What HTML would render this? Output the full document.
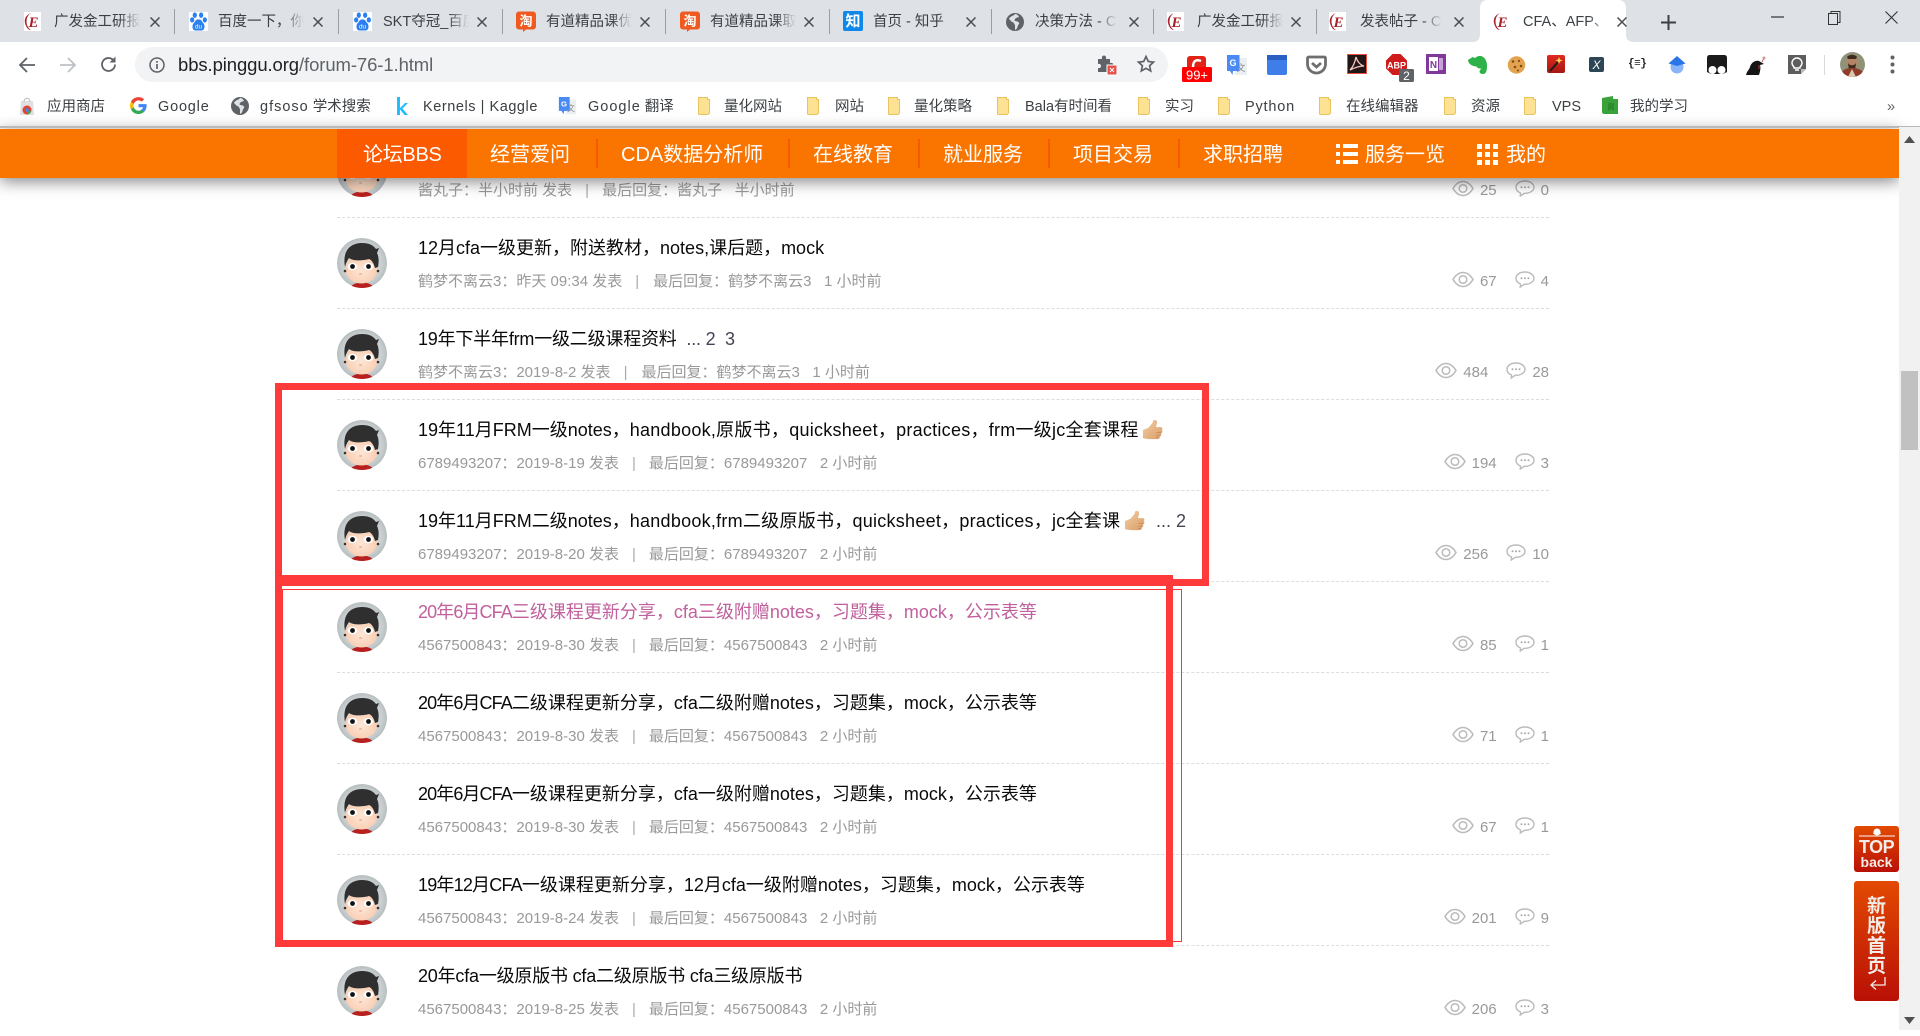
<!DOCTYPE html>
<html lang="zh-CN"><head><meta charset="utf-8"><title>CFA、AFP、FRM</title>
<style>
*{box-sizing:border-box}
html,body{margin:0;padding:0;width:1920px;height:1030px;overflow:hidden;background:#fff;font-family:"Liberation Sans","Noto Sans CJK SC",sans-serif}
.a,.a>*{position:absolute}
svg{position:absolute;overflow:visible}
#tabs{left:0;top:0;width:1920px;height:42px;background:#dee1e6}
.tt{top:13px;height:18px;line-height:18px;font-size:14.5px;color:#3c4043;white-space:nowrap;overflow:hidden;width:86px;-webkit-mask-image:linear-gradient(90deg,#000 76%,transparent);mask-image:linear-gradient(90deg,#000 76%,transparent)}
.sp{top:9px;width:1px;height:25px;background:#9a9ea3}
#bar{left:0;top:42px;width:1920px;height:84px;background:#fff}
#url{left:135px;top:47px;width:1033px;height:35px;border-radius:18px;background:#f1f3f4}
.bm{top:97px;height:20px;line-height:20px;font-size:14.5px;color:#3c4043;white-space:nowrap}
.bm u{text-decoration:none;letter-spacing:.8px}
#nav{left:0;top:129px;width:1899px;height:49px;background:#f97500;box-shadow:0 3px 16px rgba(0,0,0,.5);z-index:5}
#nav div{top:0;line-height:52px;height:49px;font-size:20px;color:#fff;white-space:nowrap}
#nav i{position:absolute;top:10px;width:2px;height:29px;background:#f55a00}
.r{position:absolute;left:0;width:1899px;height:91px;z-index:1}
.r>*{position:absolute}
.r .l{left:337px;top:91px;width:1212px;height:0;border-top:1px dashed #ddd}
.r .t{left:418px;top:18px;line-height:26px;font-size:18px;color:#0a0a0a;white-space:nowrap}
.r .t.v{color:#c0609c}
.r .t u{text-decoration:none}
.r .m{left:418px;top:54px;line-height:22px;font-size:15px;color:#999;white-space:pre}
.r .m b{font-weight:400;color:#aaa;margin:0 13px}
.r .s{right:350px;top:54px;height:22px;line-height:22px;font-size:15px;color:#999;display:flex;align-items:center;white-space:nowrap}
.s svg{position:static;display:block;margin-top:-5px}
.s span{margin:0 0 0 6px}
.s span+svg{margin-left:18px}
.red{background:#ff3a3a;z-index:3}
#sb{left:1899px;top:127px;width:21px;height:903px;background:#f1f1f1;z-index:6}
.go{z-index:7;left:1854px;width:45px;border-radius:3px;background:linear-gradient(#e24a02,#b91006);color:#f3ece8;text-align:center}
</style></head><body>

<svg width="0" height="0" style="position:absolute">
<defs>
<symbol id="av" viewBox="0 0 50 50">
<defs><clipPath id="c"><circle cx="25" cy="25" r="25"/></clipPath><radialGradient id="bgv" cx=".5" cy=".5" r=".6"><stop offset="0" stop-color="#eef0f0"/><stop offset=".7" stop-color="#c6cccd"/><stop offset="1" stop-color="#a2abad"/></radialGradient><radialGradient id="fc" cx=".5" cy=".55" r=".6"><stop offset="0" stop-color="#fde6d6"/><stop offset="1" stop-color="#f8c9ac"/></radialGradient></defs>
<g clip-path="url(#c)"><circle cx="25" cy="25" r="25" fill="url(#bgv)"/>
<ellipse cx="25" cy="49.500" rx="11" ry="5" fill="#b8201f"/>
<ellipse cx="24.500" cy="31" rx="16" ry="14.500" fill="url(#fc)"/>
<path d="M8 29C5 12 14 5 25 5c7 0 11 2 14 6l3-1-2 5c2 4 2 9 1 14l-3 1c-1-4-3-8-6-9-7 2-16 2-20-1-2 3-3 5-4 9z" fill="#2f2f30"/>
<ellipse cx="15.500" cy="28.500" rx="4.800" ry="3.800" fill="#fff"/><ellipse cx="31.500" cy="28.500" rx="4.800" ry="3.800" fill="#fff"/>
<circle cx="15.500" cy="28.500" r="2.400" fill="#111"/><circle cx="31.500" cy="28.500" r="2.400" fill="#111"/>
<circle cx="8" cy="33" r="1.300" fill="#333"/><circle cx="41" cy="33" r="1.300" fill="#333"/>
<ellipse cx="23.500" cy="36" rx="1.500" ry="1" fill="#f2b79a"/></g>
</symbol>
<symbol id="eye" viewBox="0 0 22 17"><path d="M1 8.500C4 3.500 7 1.500 11 1.500s7 2 10 7c-3 5-6 7-10 7s-7-2-10-7z" fill="none" stroke="#bbb" stroke-width="1.500"/><circle cx="11" cy="8.500" r="3.800" fill="none" stroke="#bbb" stroke-width="1.500"/></symbol>
<symbol id="cm" viewBox="0 0 20 17"><path d="M10 1C5 1 1 3.600 1 7.300c0 2.500 1.800 4.600 4.500 5.700L5.300 16l4-2.700h.7c5 0 9-2.600 9-6S15 1 10 1z" fill="none" stroke="#bbb" stroke-width="1.400"/><circle cx="6.500" cy="7.300" r="1" fill="#aaa"/><circle cx="10" cy="7.300" r="1" fill="#aaa"/><circle cx="13.500" cy="7.300" r="1" fill="#aaa"/></symbol>
<symbol id="th" viewBox="0 0 22 22"><defs><linearGradient id="tg" x1="0" y1="0" x2="1" y2="1"><stop offset="0" stop-color="#f3cfa3"/><stop offset="1" stop-color="#d99c68"/></linearGradient></defs><path d="M1 10.500l6-2.500 4-5 1-3c3-.5 4.500 1 3.500 4l-1 3.500h5c2 0 2.500 2 1 3 1.500 1 1 3-.500 3.500.5 1.500 0 3-1.500 3.500.3 1.500-.5 2.500-2.500 2.500H8c-2.500 0-3-.5-5-.5L1 19z" fill="url(#tg)"/><path d="M15 13h5M15 16h4.500M14.500 18.500h3.500" stroke="#c48a58" stroke-width=".8"/></symbol>
<symbol id="x" viewBox="0 0 10 10"><path d="M.5.5l9 9M9.500.5l-9 9" stroke="#4a4d50" stroke-width="1.500" fill="none"/></symbol>
<symbol id="fE" viewBox="0 0 17 19"><rect width="17" height="19" fill="#fff"/><path d="M7 1C2 3 0 7 1 11s3 7 6 7C4 16 2.500 13 2.500 9.500S4 3 7 1z" fill="#a8222a"/><text x="4.500" y="15" font-family="Liberation Serif" font-style="italic" font-weight="700" font-size="15" fill="#a8222a">E</text></symbol>
<symbol id="fB" viewBox="0 0 18 18"><rect width="18" height="18" fill="#fff"/><g fill="#2b7ff0"><ellipse cx="5.500" cy="3" rx="2" ry="2.600"/><ellipse cx="11.500" cy="3" rx="2" ry="2.600"/><ellipse cx="3" cy="7.500" rx="2" ry="2.500"/><ellipse cx="15" cy="7.500" rx="2" ry="2.500"/><path d="M9 7c3 0 3 2 4.500 3.500 2 2 1.500 7-1.500 7H6c-3 0-3.500-5-1.500-7C6 9 6 7 9 7z"/></g><text x="9" y="15.500" text-anchor="middle" font-family="Liberation Sans" font-size="6" fill="#fff">du</text></symbol>
<symbol id="fT" viewBox="0 0 20 20"><rect width="20" height="18" rx="3" fill="#ef5a21"/><path d="M7 18v2.500l3-2.500z" fill="#ef5a21"/><text x="10" y="14" text-anchor="middle" font-family="Noto Sans CJK SC" font-size="13" font-weight="700" fill="#fff">淘</text></symbol>
<symbol id="fZ" viewBox="0 0 20 20"><rect width="20" height="20" rx="2" fill="#0f88eb"/><text x="10" y="15" text-anchor="middle" font-family="Noto Sans CJK SC" font-size="15" font-weight="700" fill="#fff">知</text></symbol>
<symbol id="fG" viewBox="0 0 18 18"><circle cx="9" cy="9" r="9" fill="#5f6368"/><path d="M9 1c-1 2-5 2-6 5l3 3c2 0 2 2 3 3v5c3-1 2-4 4-6 1-2-2-3-4-3-1-1 0-2 1-3l3-1C12 2 11 1 9 1z" fill="#dee1e6"/></symbol>
<symbol id="fo" viewBox="0 0 16 20"><path d="M1.500 1.500h9l0 2 2 0v13c0 1-1 2-2 2h-8c-.6 0-1-.4-1-1z" fill="#fde293" stroke="#e9c35f"/></symbol>
<symbol id="fT2" viewBox="0 0 22 24"><rect x="9" y="4" width="12" height="17" fill="#eceff1"/><text x="15" y="17" text-anchor="middle" font-family="Noto Sans CJK SC" font-size="9" fill="#888">文</text><path d="M1 1h12.500v16H7l-.500 4-2.500-4H1z" fill="#4a8af4"/><text x="7" y="12" text-anchor="middle" font-family="Liberation Sans" font-weight="700" font-size="9" fill="#fff">G</text></symbol>
</defs></svg>

<div class="a" id="tabs" style="left:0;top:0">
<svg style="left:1472px;top:0" width="178" height="42"><path d="M0 42c6 0 8-3 8-8V8c0-5 3-8 8-8h130c5 0 8 3 8 8v26c0 5 2 8 8 8z" fill="#fff"/></svg>
<svg style="left:24px;top:12px" width="17" height="19"><use href="#fE"/></svg><div class="tt" style="left:54px">广发金工研报告</div><svg style="left:150px;top:17px" width="10" height="10"><use href="#x"/></svg><i class="sp" style="left:174px"></i>
<svg style="left:189px;top:12px" width="19" height="19"><use href="#fB"/></svg><div class="tt" style="left:218px">百度一下，你就知道</div><svg style="left:313px;top:17px" width="10" height="10"><use href="#x"/></svg><i class="sp" style="left:338px"></i>
<svg style="left:353px;top:12px" width="19" height="19"><use href="#fB"/></svg><div class="tt" style="left:383px">SKT夺冠_百度</div><svg style="left:477px;top:17px" width="10" height="10"><use href="#x"/></svg><i class="sp" style="left:502px"></i>
<svg style="left:516px;top:11px" width="20" height="21"><use href="#fT"/></svg><div class="tt" style="left:546px">有道精品课优选</div><svg style="left:640px;top:17px" width="10" height="10"><use href="#x"/></svg><i class="sp" style="left:665px"></i>
<svg style="left:680px;top:11px" width="20" height="21"><use href="#fT"/></svg><div class="tt" style="left:710px">有道精品课取</div><svg style="left:804px;top:17px" width="10" height="10"><use href="#x"/></svg><i class="sp" style="left:829px"></i>
<svg style="left:843px;top:11px" width="20" height="20"><use href="#fZ"/></svg><div class="tt" style="left:873px">首页 - 知乎</div><svg style="left:966px;top:17px" width="10" height="10"><use href="#x"/></svg><i class="sp" style="left:991px"></i>
<svg style="left:1006px;top:13px" width="18" height="18"><use href="#fG"/></svg><div class="tt" style="left:1035px;width:82px">决策方法 - CDA</div><svg style="left:1129px;top:17px" width="10" height="10"><use href="#x"/></svg><i class="sp" style="left:1153px"></i>
<svg style="left:1167px;top:12px" width="17" height="19"><use href="#fE"/></svg><div class="tt" style="left:1197px">广发金工研报告</div><svg style="left:1291px;top:17px" width="10" height="10"><use href="#x"/></svg><i class="sp" style="left:1316px"></i>
<svg style="left:1329px;top:12px" width="17" height="19"><use href="#fE"/></svg><div class="tt" style="left:1360px;width:82px">发表帖子 - CDA</div><svg style="left:1454px;top:17px" width="10" height="10"><use href="#x"/></svg>
<svg style="left:1493px;top:12px" width="17" height="19"><use href="#fE"/></svg><div class="tt" style="left:1523px">CFA、AFP、FRM</div><svg style="left:1617px;top:17px" width="10" height="10"><use href="#x"/></svg>
<svg style="left:1661px;top:15px" width="15" height="15"><path d="M7.500 0v15M0 7.500h15" stroke="#3c4043" stroke-width="2"/></svg>
<svg style="left:1771px;top:16px" width="13" height="2"><path d="M0 1h13" stroke="#333" stroke-width="1.200"/></svg>
<svg style="left:1828px;top:11px" width="13" height="14"><rect x=".5" y="2.500" width="9" height="11" fill="none" stroke="#333"/><path d="M3 2.500V.5h9v11h-2.500" fill="none" stroke="#333"/></svg>
<svg style="left:1885px;top:11px" width="13" height="13"><path d="M.5.5l12 12M12.500.5l-12 12" stroke="#333" stroke-width="1.100"/></svg>
</div>

<div class="a" id="bar" style="left:0;top:42px"></div>
<div class="a" style="left:0;top:0;width:1920px;height:130px;z-index:2;pointer-events:none">
<div id="url"></div>
<svg style="left:18px;top:56px" width="18" height="18"><path d="M17 9H2M9 2 2 9l7 7" fill="none" stroke="#5f6368" stroke-width="1.800"/></svg>
<svg style="left:59px;top:56px" width="18" height="18"><path d="M1 9h15M9 2l7 7-7 7" fill="none" stroke="#bdc1c6" stroke-width="1.800"/></svg>
<svg style="left:99px;top:55px" width="19" height="19"><path d="M16 9.500a6.500 6.500 0 1 1-2-4.700L16 7" fill="none" stroke="#5f6368" stroke-width="1.800"/><path d="M16.500 1.500v6h-6z" fill="#5f6368"/></svg>
<svg style="left:149px;top:57px" width="16" height="16"><circle cx="8" cy="8" r="7" fill="none" stroke="#5f6368" stroke-width="1.500"/><path d="M8 7v5M8 4v1.800" stroke="#5f6368" stroke-width="1.700"/></svg>
<div style="left:178px;top:53px;line-height:24px;font-size:18.500px;letter-spacing:-.1px;color:#202124;white-space:nowrap">bbs.pinggu.org<span style="color:#5f6368">/forum-76-1.html</span></div>

<svg style="left:1097px;top:55px" width="20" height="20"><path d="M1 4h4c-.5-2 .5-3.500 2-3.500S9.500 2 9 4h4v4c2-.5 3.500.5 3.500 2S15 12.500 13 12v5H1v-4c2 .5 3-.5 3-2S3 8.500 1 9z" fill="#5f6368"/><rect x="10" y="10" width="10" height="10" fill="#e5534b" stroke="#fff"/><path d="M13 13l4 4M17 13l-4 4" stroke="#fff"/></svg>
<svg style="left:1137px;top:55px" width="18" height="18"><path d="M9 1.500l2.300 5 5.200.6-3.900 3.600 1.100 5.300L9 13.300 4.300 16l1.100-5.300L1.500 7.100l5.200-.6z" fill="none" stroke="#5f6368" stroke-width="1.700"/></svg>

<svg style="left:1181px;top:54px" width="32" height="29"><rect x="6" y="2" width="19" height="18" rx="3" fill="#e02517"/><path d="M20 7c-5-2-8 0-8 6v5" fill="none" stroke="#fff" stroke-width="2.500"/><rect x="1" y="13" width="30" height="15" rx="1.500" fill="#f00"/><text x="16" y="25.500" text-anchor="middle" font-family="Liberation Sans" font-size="13" fill="#fff">99+</text></svg>
<svg style="left:1226px;top:54px" width="22" height="24"><use href="#fT2"/></svg>
<svg style="left:1267px;top:55px" width="20" height="20"><rect width="20" height="20" rx="2" fill="#3f7ee8"/><rect width="20" height="5" fill="#2a5fc4"/></svg>
<svg style="left:1306px;top:55px" width="21" height="20"><path d="M3 2h15c1 0 1.500.5 1.500 1.500V9c0 5-4 9-9 9s-9-4-9-9V3.500C1.500 2.500 2 2 3 2z" fill="none" stroke="#6e6e6e" stroke-width="2.800"/><path d="M6 8l4.500 4L15 8" fill="none" stroke="#6e6e6e" stroke-width="2.800"/></svg>
<svg style="left:1347px;top:54px" width="20" height="20"><rect x=".5" y=".5" width="19" height="19" fill="#221617" stroke="#e94e3d"/><path d="M9 3c-1 5-3 10-6 13 4-2 9-4 14-4-4-1-7-5-8-9z" fill="none" stroke="#f7c7c3" stroke-width="1.300"/></svg>
<svg style="left:1386px;top:54px" width="29" height="29"><path d="M6.500 0h8L21 6.500v8L14.500 21h-8L0 14.500v-8z" fill="#cf1b1b"/><text x="10.500" y="14.500" text-anchor="middle" font-family="Liberation Sans" font-weight="700" font-size="9" fill="#fff">ABP</text><rect x="13" y="15" width="15" height="13" rx="1.500" fill="#5f6368"/><text x="20.500" y="26" text-anchor="middle" font-family="Liberation Sans" font-size="12" fill="#fff">2</text></svg>
<svg style="left:1426px;top:54px" width="20" height="20"><rect width="20" height="20" fill="#80399a"/><rect x="3" y="3" width="9" height="14" fill="#fff"/><text x="7.500" y="14" text-anchor="middle" font-family="Liberation Sans" font-weight="700" font-size="10" fill="#80399a">N</text><rect x="13" y="4" width="4" height="12" fill="#c9a4d6"/></svg>
<svg style="left:1467px;top:55px" width="21" height="20"><path d="M1 5l4.500-3L8 3c2-2 6-3 8-1 2 1 4 4 4 9 0 5-1 8-4 8-2 0-3.500-1-3.500-2.500S14 14 15 14l-2-.5c-2 0-3-1-3.500-2-3 0-6-1.500-7.500-3.500C1.500 7 1 6 1 5z" fill="#2db24a"/></svg>
<svg style="left:1507px;top:56px" width="19" height="18"><circle cx="9.500" cy="9" r="8.700" fill="#e3a24d"/><circle cx="6" cy="5.500" r="1.300" fill="#7c4e1a"/><circle cx="12" cy="5" r="1.100" fill="#7c4e1a"/><circle cx="14" cy="10" r="1.300" fill="#7c4e1a"/><circle cx="8" cy="11" r="1.300" fill="#7c4e1a"/><circle cx="11" cy="14.500" r="1" fill="#7c4e1a"/></svg>
<svg style="left:1547px;top:55px" width="19" height="19"><defs><linearGradient id="w" x1="0" y1="0" x2="0" y2="1"><stop offset="0" stop-color="#e02a1f"/><stop offset="1" stop-color="#a51713"/></linearGradient></defs><rect width="18" height="18" rx="2" fill="url(#w)"/><path d="M3 16 11 7" stroke="#1c1c1c" stroke-width="2"/><path d="M12 2l1 2.500L15.500 5.500 13 6.500 12 9l-1-2.500L8.500 5.500 11 4.500z" fill="#fbd35a"/></svg>
<svg style="left:1589px;top:57px" width="15" height="15"><rect width="15" height="15" rx="2" fill="#2c4656"/><text x="7.500" y="12" text-anchor="middle" font-family="Liberation Sans" font-style="italic" font-size="12" fill="#fff">X</text></svg>
<div style="left:1628px;top:55px;font-family:'Liberation Mono';font-size:11px;font-weight:700;line-height:18px;color:#222;white-space:nowrap;letter-spacing:-.5px">{≡}</div>
<svg style="left:1668px;top:55px" width="18" height="19"><circle cx="9" cy="12" r="6.500" fill="#8ab4f8"/><path d="M9 1l8.500 7.500L9 11 .5 8.500z" fill="#2a76e8"/></svg>
<svg style="left:1707px;top:55px" width="20" height="20"><path d="M3 0h14c2 0 3 1 3 3v14l-4 2H4l-4-2V3c0-2 1-3 3-3z" fill="#1b1b1b"/><circle cx="5.500" cy="15" r="4" fill="#fff"/><circle cx="14.500" cy="15" r="4" fill="#fff"/></svg>
<svg style="left:1746px;top:56px" width="21" height="19"><path d="M0 19c1-4 3-5 4-8 1-4 5-7 9-6l5 3-4 1c1 3 0 7-1 10z" fill="#151515"/><path d="M16 6l2-4" stroke="#c56" stroke-width="1"/><circle cx="18" cy="2" r="1.500" fill="#c98"/><path d="M13 9v4" stroke="#c33"/></svg>
<svg style="left:1787px;top:55px" width="20" height="20"><path d="M1 0h18v14l-5 5H1z" fill="#5d5d5d"/><path d="M14 19v-5h5z" fill="#bbb"/><path d="M7 12c-1-1-2-2-2-4a5 5 0 0 1 10 0c0 2-1 3-2 4v1H7zM8 15h4" fill="none" stroke="#fff" stroke-width="1.400"/></svg>
<i style="left:1824px;top:55px;width:1px;height:20px;background:#d7d9db"></i>
<svg style="left:1840px;top:52px" width="25" height="25"><defs><clipPath id="p"><circle cx="12.500" cy="12.500" r="12.500"/></clipPath></defs><g clip-path="url(#p)"><rect width="25" height="25" fill="#8f9479"/><ellipse cx="12" cy="10" rx="5.500" ry="7" fill="#b58365"/><path d="M7 5c2-3 8-3 10 0l-1 2H8zM8 11c2 3 6 3 8 0l-1 8H9z" fill="#3e2c1e"/><path d="M0 25c1-7 6-9 12-9s12 2 13 9z" fill="#8e3b2a"/><path d="M8 25l4-8 4 8z" fill="#d8c8b0"/></g></svg>
<svg style="left:1890px;top:55px" width="5" height="19"><circle cx="2.500" cy="2.500" r="2" fill="#5f6368"/><circle cx="2.500" cy="9.500" r="2" fill="#5f6368"/><circle cx="2.500" cy="16.500" r="2" fill="#5f6368"/></svg>

<svg style="left:19px;top:97px" width="16" height="19"><path d="M2 4h12l1 14H1z" fill="#e0e0e0"/><path d="M5 5c0-5 6-5 6 0" fill="none" stroke="#bbb"/><circle cx="8" cy="13" r="4.500" fill="#e0452f"/><path d="M8 13v4.500a4.500 4.500 0 0 0 4-3z" fill="#34a853"/><circle cx="8" cy="13" r="1.800" fill="#4285f4"/></svg>
<div class="bm" style="left:47px">应用商店</div>
<svg style="left:130px;top:97px" width="17" height="17" viewBox="0 0 18 18"><path d="M17.600 9.200c0-.6 0-1.200-.1-1.700H9v3.300h4.800a4 4 0 0 1-1.800 2.700v2.200h2.900c1.700-1.600 2.700-3.900 2.700-6.500z" fill="#4285f4"/><path d="M9 18c2.400 0 4.500-.8 5.900-2.200L12 13.600c-.8.500-1.800.9-3 .9-2.300 0-4.300-1.600-5-3.700H1v2.300A9 9 0 0 0 9 18z" fill="#34a853"/><path d="M4 10.800a5.400 5.400 0 0 1 0-3.500V5H1a9 9 0 0 0 0 8.100z" fill="#fbbc05"/><path d="M9 3.600c1.300 0 2.500.5 3.400 1.300L15 2.400A9 9 0 0 0 1 5l3 2.300c.7-2.100 2.700-3.700 5-3.700z" fill="#ea4335"/></svg>
<div class="bm" style="left:158px"><u>Google</u></div>
<svg style="left:231px;top:97px" width="18" height="18"><use href="#fG"/></svg>
<div class="bm" style="left:260px"><u style="letter-spacing:1px">gfsoso</u> 学术搜索</div>
<svg style="left:396px;top:96px" width="12" height="20"><path d="M1 1h3v11l5-5h3l-5.500 5.500L12 19H8.500L4 13.500V19H1z" fill="#20beff"/></svg>
<div class="bm" style="left:423px"><u style="letter-spacing:.55px">Kernels | Kaggle</u></div>
<svg style="left:558px;top:96px" width="19" height="21"><use href="#fT2"/></svg>
<div class="bm" style="left:588px"><u style="letter-spacing:1px">Google</u> 翻译</div>
<svg style="left:697px;top:96px" width="16" height="20"><use href="#fo"/></svg><div class="bm" style="left:724px">量化网站</div>
<svg style="left:806px;top:96px" width="16" height="20"><use href="#fo"/></svg><div class="bm" style="left:835px">网站</div>
<svg style="left:887px;top:96px" width="16" height="20"><use href="#fo"/></svg><div class="bm" style="left:914px">量化策略</div>
<svg style="left:996px;top:96px" width="16" height="20"><use href="#fo"/></svg><div class="bm" style="left:1025px">Bala有时间看</div>
<svg style="left:1137px;top:96px" width="16" height="20"><use href="#fo"/></svg><div class="bm" style="left:1165px">实习</div>
<svg style="left:1217px;top:96px" width="16" height="20"><use href="#fo"/></svg><div class="bm" style="left:1245px"><u>Python</u></div>
<svg style="left:1318px;top:96px" width="16" height="20"><use href="#fo"/></svg><div class="bm" style="left:1346px">在线编辑器</div>
<svg style="left:1443px;top:96px" width="16" height="20"><use href="#fo"/></svg><div class="bm" style="left:1471px">资源</div>
<svg style="left:1523px;top:96px" width="16" height="20"><use href="#fo"/></svg><div class="bm" style="left:1552px">VPS</div>
<svg style="left:1601px;top:95px" width="18" height="20"><path d="M1 3l11-2v3h5v15H3c-1 0-2-1-2-2z" fill="#3aa23a"/><path d="M7 8h6v8l-3-2-3 2z" fill="#2e8b2e"/></svg>
<div class="bm" style="left:1630px">我的学习</div>
<div class="bm" style="left:1887px;color:#5f6368">»</div>
</div>

<div style="position:absolute;left:0;top:126px;width:1920px;height:2px;background:#b9b9b9;z-index:6"></div>

<div class="a" id="nav">
<div style="left:337px;width:130px;background:#fb5a00"></div>
<div style="left:363px;letter-spacing:-.3px">论坛BBS</div>
<div style="left:490px">经营爱问</div><i style="left:596px"></i>
<div style="left:621px">CDA数据分析师</div><i style="left:788px"></i>
<div style="left:813px">在线教育</div><i style="left:918px"></i>
<div style="left:943px">就业服务</div><i style="left:1048px"></i>
<div style="left:1073px">项目交易</div><i style="left:1178px"></i>
<div style="left:1203px">求职招聘</div>
<svg style="left:1336px;top:15px" width="22" height="21"><path d="M0 0h4v4H0zM7 0h15v4H7zM0 8h4v4H0zM7 8h15v4H7zM0 16h4v4H0zM7 16h15v4H7z" fill="#fff"/></svg>
<div style="left:1365px">服务一览</div>
<svg style="left:1477px;top:15px" width="22" height="21"><path d="M0 0h5v5H0zM8 0h5v5H8zM16 0h5v5h-5zM0 8h5v5H0zM8 8h5v5H8zM16 8h5v5h-5zM0 16h5v5H0zM8 16h5v5H8zM16 16h5v5h-5z" fill="#fff"/></svg>
<div style="left:1506px">我的</div>
</div>

<div class="r" style="top:126px"><svg style="left:337px;top:21px" width="50" height="50"><use href="#av"/></svg><div class="t">酱丸子的帖子</div><div class="m">酱丸子：半小时前 发表<b>|</b>最后回复：酱丸子   半小时前</div><div class="s"><svg width="22" height="17"><use href="#eye"/></svg><span>25</span><svg width="20" height="17"><use href="#cm"/></svg><span>0</span></div><div class="l"></div></div>

<div class="r" style="top:217px"><svg style="left:337px;top:21px" width="50" height="50"><use href="#av"/></svg><div class="t">12月cfa一级更新，附送教材，notes,课后题，mock</div><div class="m">鹤梦不离云3：昨天 09:34 发表<b style="margin-right:14px">|</b>最后回复：鹤梦不离云3   1 小时前</div><div class="s"><svg width="22" height="17"><use href="#eye"/></svg><span>67</span><svg width="20" height="17"><use href="#cm"/></svg><span>4</span></div><div class="l"></div></div>

<div class="r" style="top:308px"><svg style="left:337px;top:21px" width="50" height="50"><use href="#av"/></svg><div class="t" style="letter-spacing:-.2px">19年下半年frm一级二级课程资料 <span style="color:#445;margin-left:5px">... 2&nbsp; 3</span></div><div class="m">鹤梦不离云3：2019-8-2 发表<b style="margin-right:14px">|</b>最后回复：鹤梦不离云3   1 小时前</div><div class="s"><svg width="22" height="17"><use href="#eye"/></svg><span>484</span><svg width="20" height="17"><use href="#cm"/></svg><span>28</span></div><div class="l"></div></div>

<div class="r" style="top:399px"><svg style="left:337px;top:21px" width="50" height="50"><use href="#av"/></svg><div class="t">19年11月FRM一级notes，<u style="letter-spacing:.26px">handbook,原版书，quicksheet，practices，frm一级jc全套课程</u></div><svg style="left:1142px;top:21px" width="21" height="21"><use href="#th"/></svg><div class="m">6789493207：2019-8-19 发表<b>|</b>最后回复：6789493207   2 小时前</div><div class="s"><svg width="22" height="17"><use href="#eye"/></svg><span>194</span><svg width="20" height="17"><use href="#cm"/></svg><span>3</span></div><div class="l"></div></div>

<div class="r" style="top:490px"><svg style="left:337px;top:21px" width="50" height="50"><use href="#av"/></svg><div class="t">19年11月FRM二级notes，<u style="letter-spacing:.26px">handbook,frm二级原版书，quicksheet，practices，jc全套课</u></div><svg style="left:1124px;top:21px" width="21" height="21"><use href="#th"/></svg><div class="t" style="left:1156px;color:#445">... 2</div><div class="m">6789493207：2019-8-20 发表<b>|</b>最后回复：6789493207   2 小时前</div><div class="s"><svg width="22" height="17"><use href="#eye"/></svg><span>256</span><svg width="20" height="17"><use href="#cm"/></svg><span>10</span></div><div class="l"></div></div>

<div class="r" style="top:581px"><svg style="left:337px;top:21px" width="50" height="50"><use href="#av"/></svg><div class="t v"><u style="letter-spacing:-.9px">20年6月CFA</u>三级课程更新分享，cfa三级附赠notes，习题集，mock，公示表等</div><div class="m">4567500843：2019-8-30 发表<b>|</b>最后回复：4567500843   2 小时前</div><div class="s"><svg width="22" height="17"><use href="#eye"/></svg><span>85</span><svg width="20" height="17"><use href="#cm"/></svg><span>1</span></div><div class="l"></div></div>

<div class="r" style="top:672px"><svg style="left:337px;top:21px" width="50" height="50"><use href="#av"/></svg><div class="t"><u style="letter-spacing:-.9px">20年6月CFA</u>二级课程更新分享，cfa二级附赠notes，习题集，mock，公示表等</div><div class="m">4567500843：2019-8-30 发表<b>|</b>最后回复：4567500843   2 小时前</div><div class="s"><svg width="22" height="17"><use href="#eye"/></svg><span>71</span><svg width="20" height="17"><use href="#cm"/></svg><span>1</span></div><div class="l"></div></div>

<div class="r" style="top:763px"><svg style="left:337px;top:21px" width="50" height="50"><use href="#av"/></svg><div class="t"><u style="letter-spacing:-.9px">20年6月CFA</u>一级课程更新分享，cfa一级附赠notes，习题集，mock，公示表等</div><div class="m">4567500843：2019-8-30 发表<b>|</b>最后回复：4567500843   2 小时前</div><div class="s"><svg width="22" height="17"><use href="#eye"/></svg><span>67</span><svg width="20" height="17"><use href="#cm"/></svg><span>1</span></div><div class="l"></div></div>

<div class="r" style="top:854px"><svg style="left:337px;top:21px" width="50" height="50"><use href="#av"/></svg><div class="t"><u style="letter-spacing:-.8px">19年12月CFA</u>一级课程更新分享，12月cfa一级附赠notes，习题集，mock，公示表等</div><div class="m">4567500843：2019-8-24 发表<b>|</b>最后回复：4567500843   2 小时前</div><div class="s"><svg width="22" height="17"><use href="#eye"/></svg><span>201</span><svg width="20" height="17"><use href="#cm"/></svg><span>9</span></div><div class="l"></div></div>

<div class="r" style="top:945px"><svg style="left:337px;top:21px" width="50" height="50"><use href="#av"/></svg><div class="t" style="letter-spacing:-.2px">20年cfa一级原版书 cfa二级原版书 cfa三级原版书</div><div class="m">4567500843：2019-8-25 发表<b>|</b>最后回复：4567500843   2 小时前</div><div class="s"><svg width="22" height="17"><use href="#eye"/></svg><span>206</span><svg width="20" height="17"><use href="#cm"/></svg><span>3</span></div></div>

<div style="position:absolute;left:282px;top:589px;width:900px;height:353px;border:1px solid #f33;z-index:2"></div>
<div class="red" style="position:absolute;left:275px;top:383px;width:934px;height:7px"></div>
<div class="red" style="position:absolute;left:275px;top:383px;width:7px;height:564px"></div>
<div class="red" style="position:absolute;left:1202px;top:383px;width:7px;height:203px"></div>
<div class="red" style="position:absolute;left:275px;top:579px;width:934px;height:7px"></div>
<div class="red" style="position:absolute;left:282px;top:575px;width:891px;height:11px"></div>
<div class="red" style="position:absolute;left:1166px;top:575px;width:7px;height:372px"></div>
<div class="red" style="position:absolute;left:275px;top:940px;width:898px;height:7px"></div>

<div class="a" id="sb"><div style="left:2px;top:244px;width:17px;height:79px;background:#c1c1c1"></div>
<svg style="left:5px;top:9px" width="11" height="7"><path d="M5.500 0 11 7H0z" fill="#505050"/></svg>
<svg style="left:5px;top:890px" width="11" height="7"><path d="M0 0h11L5.500 7z" fill="#505050"/></svg></div>

<div class="a go" style="left:1854px;top:826px;height:46px;position:absolute">
<svg style="left:5px;top:2px" width="36" height="9"><path d="M14 6l2-4h4l2 4z" fill="#fff"/><circle cx="18" cy="4" r="3.500" fill="#fff"/><path d="M0 8h36" stroke="#f3d6c8" stroke-width="1.200"/></svg>
<div style="position:absolute;left:0;right:0;top:13px;font-size:18px;line-height:17px;font-weight:700;letter-spacing:-.5px">TOP</div>
<div style="position:absolute;left:0;right:0;top:29px;font-size:14px;line-height:14px;font-weight:700">back</div>
</div>
<div class="a go" style="left:1854px;top:881px;height:120px;position:absolute">
<div style="position:absolute;left:0;right:0;top:14px;font-family:'Noto Sans CJK SC',sans-serif;font-weight:700;font-size:19px;line-height:20px">新<br>版<br>首<br>页</div>
<svg style="left:16px;top:96px" width="16" height="13"><path d="M15 0v8H2M6 3.500 1 8l5 4.500" fill="none" stroke="#f3ece8" stroke-width="1.300"/></svg>
</div>
</body></html>
